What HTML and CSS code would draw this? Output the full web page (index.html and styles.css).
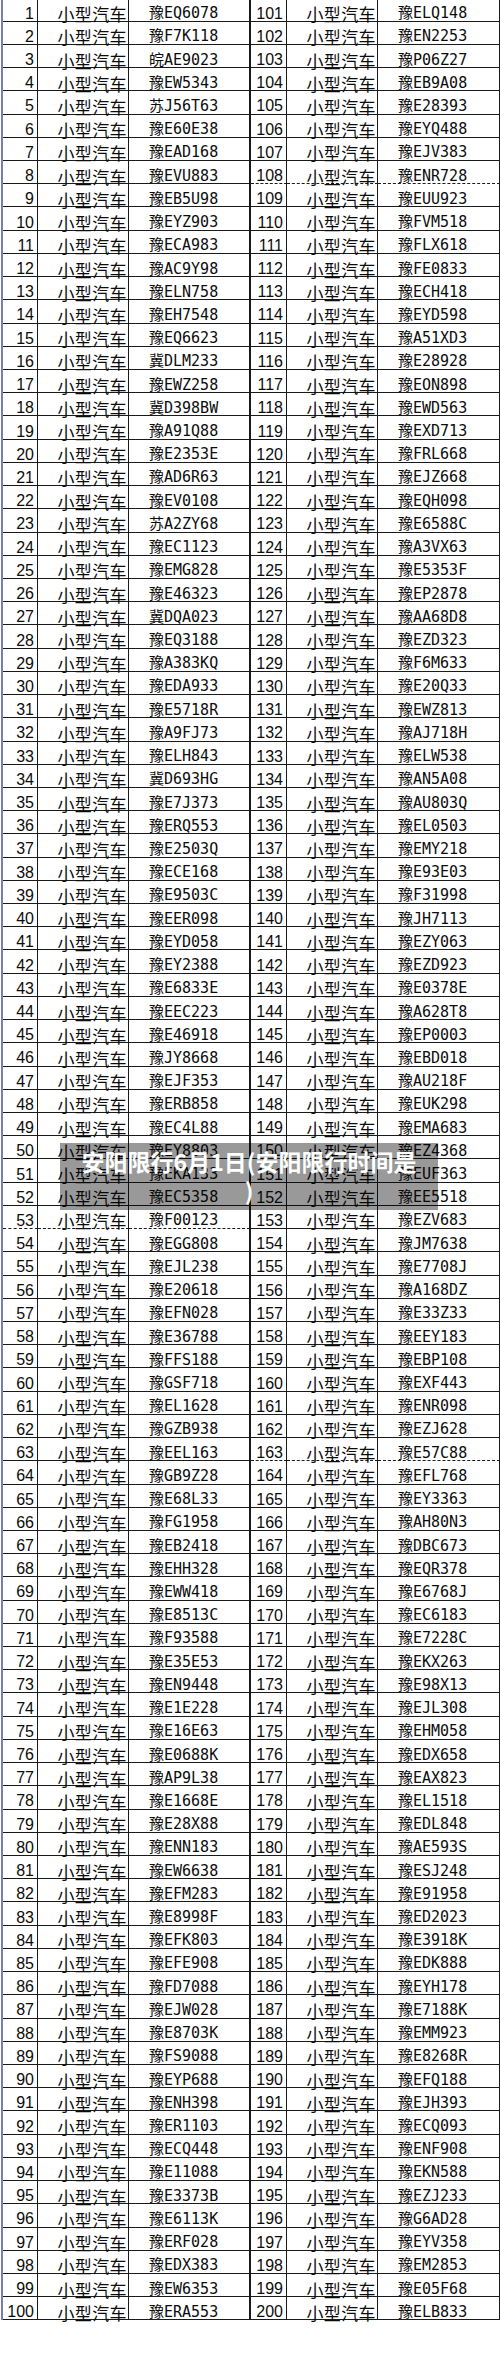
FILE: index.html
```html
<!DOCTYPE html>
<html lang="zh">
<head>
<meta charset="utf-8">
<title>安阳限行6月1日</title>
<link rel="stylesheet" href="styles.css">
</head>
<body>
<div class="page">
  <div class="sheet">
    <div class="tbl left">
      <div class="n">1</div><div class="t">小型汽车</div><div class="p">豫EQ6078</div>
      <div class="n">2</div><div class="t">小型汽车</div><div class="p">豫F7K118</div>
      <div class="n">3</div><div class="t">小型汽车</div><div class="p">皖AE9023</div>
      <div class="n">4</div><div class="t">小型汽车</div><div class="p">豫EW5343</div>
      <div class="n">5</div><div class="t">小型汽车</div><div class="p">苏J56T63</div>
      <div class="n">6</div><div class="t">小型汽车</div><div class="p">豫E60E38</div>
      <div class="n">7</div><div class="t">小型汽车</div><div class="p">豫EAD168</div>
      <div class="n">8</div><div class="t">小型汽车</div><div class="p">豫EVU883</div>
      <div class="n">9</div><div class="t">小型汽车</div><div class="p">豫EB5U98</div>
      <div class="n">10</div><div class="t">小型汽车</div><div class="p">豫EYZ903</div>
      <div class="n">11</div><div class="t">小型汽车</div><div class="p">豫ECA983</div>
      <div class="n">12</div><div class="t">小型汽车</div><div class="p">豫AC9Y98</div>
      <div class="n">13</div><div class="t">小型汽车</div><div class="p">豫ELN758</div>
      <div class="n">14</div><div class="t">小型汽车</div><div class="p">豫EH7548</div>
      <div class="n">15</div><div class="t">小型汽车</div><div class="p">豫EQ6623</div>
      <div class="n">16</div><div class="t">小型汽车</div><div class="p">冀DLM233</div>
      <div class="n">17</div><div class="t">小型汽车</div><div class="p">豫EWZ258</div>
      <div class="n">18</div><div class="t">小型汽车</div><div class="p">冀D398BW</div>
      <div class="n">19</div><div class="t">小型汽车</div><div class="p">豫A91Q88</div>
      <div class="n">20</div><div class="t">小型汽车</div><div class="p">豫E2353E</div>
      <div class="n">21</div><div class="t">小型汽车</div><div class="p">豫AD6R63</div>
      <div class="n">22</div><div class="t">小型汽车</div><div class="p">豫EV0108</div>
      <div class="n">23</div><div class="t">小型汽车</div><div class="p">苏A2ZY68</div>
      <div class="n">24</div><div class="t">小型汽车</div><div class="p">豫EC1123</div>
      <div class="n">25</div><div class="t">小型汽车</div><div class="p">豫EMG828</div>
      <div class="n">26</div><div class="t">小型汽车</div><div class="p">豫E46323</div>
      <div class="n">27</div><div class="t">小型汽车</div><div class="p">冀DQA023</div>
      <div class="n">28</div><div class="t">小型汽车</div><div class="p">豫EQ3188</div>
      <div class="n">29</div><div class="t">小型汽车</div><div class="p">豫A383KQ</div>
      <div class="n">30</div><div class="t">小型汽车</div><div class="p">豫EDA933</div>
      <div class="n">31</div><div class="t">小型汽车</div><div class="p">豫E5718R</div>
      <div class="n">32</div><div class="t">小型汽车</div><div class="p">豫A9FJ73</div>
      <div class="n">33</div><div class="t">小型汽车</div><div class="p">豫ELH843</div>
      <div class="n">34</div><div class="t">小型汽车</div><div class="p">冀D693HG</div>
      <div class="n">35</div><div class="t">小型汽车</div><div class="p">豫E7J373</div>
      <div class="n">36</div><div class="t">小型汽车</div><div class="p">豫ERQ553</div>
      <div class="n">37</div><div class="t">小型汽车</div><div class="p">豫E2503Q</div>
      <div class="n">38</div><div class="t">小型汽车</div><div class="p">豫ECE168</div>
      <div class="n">39</div><div class="t">小型汽车</div><div class="p">豫E9503C</div>
      <div class="n">40</div><div class="t">小型汽车</div><div class="p">豫EER098</div>
      <div class="n">41</div><div class="t">小型汽车</div><div class="p">豫EYD058</div>
      <div class="n">42</div><div class="t">小型汽车</div><div class="p">豫EY2388</div>
      <div class="n">43</div><div class="t">小型汽车</div><div class="p">豫E6833E</div>
      <div class="n">44</div><div class="t">小型汽车</div><div class="p">豫EEC223</div>
      <div class="n">45</div><div class="t">小型汽车</div><div class="p">豫E46918</div>
      <div class="n">46</div><div class="t">小型汽车</div><div class="p">豫JY8668</div>
      <div class="n">47</div><div class="t">小型汽车</div><div class="p">豫EJF353</div>
      <div class="n">48</div><div class="t">小型汽车</div><div class="p">豫ERB858</div>
      <div class="n">49</div><div class="t">小型汽车</div><div class="p">豫EC4L88</div>
      <div class="n">50</div><div class="t">小型汽车</div><div class="p">豫EY8803</div>
      <div class="n">51</div><div class="t">小型汽车</div><div class="p">豫EKA133</div>
      <div class="n">52</div><div class="t">小型汽车</div><div class="p">豫EC5358</div>
      <div class="n dash">53</div><div class="t dash">小型汽车</div><div class="p dash">豫F00123</div>
      <div class="n">54</div><div class="t">小型汽车</div><div class="p">豫EGG808</div>
      <div class="n">55</div><div class="t">小型汽车</div><div class="p">豫EJL238</div>
      <div class="n">56</div><div class="t">小型汽车</div><div class="p">豫E20618</div>
      <div class="n">57</div><div class="t">小型汽车</div><div class="p">豫EFN028</div>
      <div class="n">58</div><div class="t">小型汽车</div><div class="p">豫E36788</div>
      <div class="n">59</div><div class="t">小型汽车</div><div class="p">豫FFS188</div>
      <div class="n">60</div><div class="t">小型汽车</div><div class="p">豫GSF718</div>
      <div class="n">61</div><div class="t">小型汽车</div><div class="p">豫EL1628</div>
      <div class="n">62</div><div class="t">小型汽车</div><div class="p">豫GZB938</div>
      <div class="n">63</div><div class="t">小型汽车</div><div class="p">豫EEL163</div>
      <div class="n">64</div><div class="t">小型汽车</div><div class="p">豫GB9Z28</div>
      <div class="n">65</div><div class="t">小型汽车</div><div class="p">豫E68L33</div>
      <div class="n">66</div><div class="t">小型汽车</div><div class="p">豫FG1958</div>
      <div class="n">67</div><div class="t">小型汽车</div><div class="p">豫EB2418</div>
      <div class="n">68</div><div class="t">小型汽车</div><div class="p">豫EHH328</div>
      <div class="n">69</div><div class="t">小型汽车</div><div class="p">豫EWW418</div>
      <div class="n">70</div><div class="t">小型汽车</div><div class="p">豫E8513C</div>
      <div class="n">71</div><div class="t">小型汽车</div><div class="p">豫F93588</div>
      <div class="n">72</div><div class="t">小型汽车</div><div class="p">豫E35E53</div>
      <div class="n">73</div><div class="t">小型汽车</div><div class="p">豫EN9448</div>
      <div class="n">74</div><div class="t">小型汽车</div><div class="p">豫E1E228</div>
      <div class="n">75</div><div class="t">小型汽车</div><div class="p">豫E16E63</div>
      <div class="n">76</div><div class="t">小型汽车</div><div class="p">豫E0688K</div>
      <div class="n">77</div><div class="t">小型汽车</div><div class="p">豫AP9L38</div>
      <div class="n">78</div><div class="t">小型汽车</div><div class="p">豫E1668E</div>
      <div class="n">79</div><div class="t">小型汽车</div><div class="p">豫E28X88</div>
      <div class="n">80</div><div class="t">小型汽车</div><div class="p">豫ENN183</div>
      <div class="n">81</div><div class="t">小型汽车</div><div class="p">豫EW6638</div>
      <div class="n">82</div><div class="t">小型汽车</div><div class="p">豫EFM283</div>
      <div class="n">83</div><div class="t">小型汽车</div><div class="p">豫E8998F</div>
      <div class="n">84</div><div class="t">小型汽车</div><div class="p">豫EFK803</div>
      <div class="n">85</div><div class="t">小型汽车</div><div class="p">豫EFE908</div>
      <div class="n">86</div><div class="t">小型汽车</div><div class="p">豫FD7088</div>
      <div class="n">87</div><div class="t">小型汽车</div><div class="p">豫EJW028</div>
      <div class="n">88</div><div class="t">小型汽车</div><div class="p">豫E8703K</div>
      <div class="n">89</div><div class="t">小型汽车</div><div class="p">豫FS9088</div>
      <div class="n">90</div><div class="t">小型汽车</div><div class="p">豫EYP688</div>
      <div class="n">91</div><div class="t">小型汽车</div><div class="p">豫ENH398</div>
      <div class="n">92</div><div class="t">小型汽车</div><div class="p">豫ER1103</div>
      <div class="n">93</div><div class="t">小型汽车</div><div class="p">豫ECQ448</div>
      <div class="n">94</div><div class="t">小型汽车</div><div class="p">豫E11088</div>
      <div class="n">95</div><div class="t">小型汽车</div><div class="p">豫E3373B</div>
      <div class="n">96</div><div class="t">小型汽车</div><div class="p">豫E6113K</div>
      <div class="n">97</div><div class="t">小型汽车</div><div class="p">豫ERF028</div>
      <div class="n">98</div><div class="t">小型汽车</div><div class="p">豫EDX383</div>
      <div class="n">99</div><div class="t">小型汽车</div><div class="p">豫EW6353</div>
      <div class="n">100</div><div class="t">小型汽车</div><div class="p">豫ERA553</div>
    </div>
    <div class="tbl right">
      <div class="n">101</div><div class="t">小型汽车</div><div class="p">豫ELQ148</div>
      <div class="n">102</div><div class="t">小型汽车</div><div class="p">豫EN2253</div>
      <div class="n">103</div><div class="t">小型汽车</div><div class="p">豫P06Z27</div>
      <div class="n">104</div><div class="t">小型汽车</div><div class="p">豫EB9A08</div>
      <div class="n">105</div><div class="t">小型汽车</div><div class="p">豫E28393</div>
      <div class="n">106</div><div class="t">小型汽车</div><div class="p">豫EYQ488</div>
      <div class="n">107</div><div class="t">小型汽车</div><div class="p">豫EJV383</div>
      <div class="n dash">108</div><div class="t dash">小型汽车</div><div class="p dash">豫ENR728</div>
      <div class="n">109</div><div class="t">小型汽车</div><div class="p">豫EUU923</div>
      <div class="n">110</div><div class="t">小型汽车</div><div class="p">豫FVM518</div>
      <div class="n">111</div><div class="t">小型汽车</div><div class="p">豫FLX618</div>
      <div class="n">112</div><div class="t">小型汽车</div><div class="p">豫FE0833</div>
      <div class="n">113</div><div class="t">小型汽车</div><div class="p">豫ECH418</div>
      <div class="n">114</div><div class="t">小型汽车</div><div class="p">豫EYD598</div>
      <div class="n">115</div><div class="t">小型汽车</div><div class="p">豫A51XD3</div>
      <div class="n">116</div><div class="t">小型汽车</div><div class="p">豫E28928</div>
      <div class="n">117</div><div class="t">小型汽车</div><div class="p">豫EON898</div>
      <div class="n">118</div><div class="t">小型汽车</div><div class="p">豫EWD563</div>
      <div class="n">119</div><div class="t">小型汽车</div><div class="p">豫EXD713</div>
      <div class="n">120</div><div class="t">小型汽车</div><div class="p">豫FRL668</div>
      <div class="n">121</div><div class="t">小型汽车</div><div class="p">豫EJZ668</div>
      <div class="n">122</div><div class="t">小型汽车</div><div class="p">豫EQH098</div>
      <div class="n">123</div><div class="t">小型汽车</div><div class="p">豫E6588C</div>
      <div class="n">124</div><div class="t">小型汽车</div><div class="p">豫A3VX63</div>
      <div class="n">125</div><div class="t">小型汽车</div><div class="p">豫E5353F</div>
      <div class="n">126</div><div class="t">小型汽车</div><div class="p">豫EP2878</div>
      <div class="n">127</div><div class="t">小型汽车</div><div class="p">豫AA68D8</div>
      <div class="n">128</div><div class="t">小型汽车</div><div class="p">豫EZD323</div>
      <div class="n">129</div><div class="t">小型汽车</div><div class="p">豫F6M633</div>
      <div class="n">130</div><div class="t">小型汽车</div><div class="p">豫E20Q33</div>
      <div class="n">131</div><div class="t">小型汽车</div><div class="p">豫EWZ813</div>
      <div class="n">132</div><div class="t">小型汽车</div><div class="p">豫AJ718H</div>
      <div class="n">133</div><div class="t">小型汽车</div><div class="p">豫ELW538</div>
      <div class="n">134</div><div class="t">小型汽车</div><div class="p">豫AN5A08</div>
      <div class="n">135</div><div class="t">小型汽车</div><div class="p">豫AU803Q</div>
      <div class="n">136</div><div class="t">小型汽车</div><div class="p">豫EL0503</div>
      <div class="n">137</div><div class="t">小型汽车</div><div class="p">豫EMY218</div>
      <div class="n">138</div><div class="t">小型汽车</div><div class="p">豫E93E03</div>
      <div class="n">139</div><div class="t">小型汽车</div><div class="p">豫F31998</div>
      <div class="n">140</div><div class="t">小型汽车</div><div class="p">豫JH7113</div>
      <div class="n">141</div><div class="t">小型汽车</div><div class="p">豫EZY063</div>
      <div class="n">142</div><div class="t">小型汽车</div><div class="p">豫EZD923</div>
      <div class="n">143</div><div class="t">小型汽车</div><div class="p">豫E0378E</div>
      <div class="n">144</div><div class="t">小型汽车</div><div class="p">豫A628T8</div>
      <div class="n">145</div><div class="t">小型汽车</div><div class="p">豫EP0003</div>
      <div class="n">146</div><div class="t">小型汽车</div><div class="p">豫EBD018</div>
      <div class="n">147</div><div class="t">小型汽车</div><div class="p">豫AU218F</div>
      <div class="n">148</div><div class="t">小型汽车</div><div class="p">豫EUK298</div>
      <div class="n">149</div><div class="t">小型汽车</div><div class="p">豫EMA683</div>
      <div class="n">150</div><div class="t">小型汽车</div><div class="p">豫EZ4368</div>
      <div class="n">151</div><div class="t">小型汽车</div><div class="p">豫EUF363</div>
      <div class="n">152</div><div class="t">小型汽车</div><div class="p">豫EE5518</div>
      <div class="n">153</div><div class="t">小型汽车</div><div class="p">豫EZV683</div>
      <div class="n">154</div><div class="t">小型汽车</div><div class="p">豫JM7638</div>
      <div class="n">155</div><div class="t">小型汽车</div><div class="p">豫E7708J</div>
      <div class="n">156</div><div class="t">小型汽车</div><div class="p">豫A168DZ</div>
      <div class="n">157</div><div class="t">小型汽车</div><div class="p">豫E33Z33</div>
      <div class="n">158</div><div class="t">小型汽车</div><div class="p">豫EEY183</div>
      <div class="n">159</div><div class="t">小型汽车</div><div class="p">豫EBP108</div>
      <div class="n">160</div><div class="t">小型汽车</div><div class="p">豫EXF443</div>
      <div class="n">161</div><div class="t">小型汽车</div><div class="p">豫ENR098</div>
      <div class="n">162</div><div class="t">小型汽车</div><div class="p">豫EZJ628</div>
      <div class="n dash">163</div><div class="t dash">小型汽车</div><div class="p dash">豫E57C88</div>
      <div class="n">164</div><div class="t">小型汽车</div><div class="p">豫EFL768</div>
      <div class="n">165</div><div class="t">小型汽车</div><div class="p">豫EY3363</div>
      <div class="n">166</div><div class="t">小型汽车</div><div class="p">豫AH80N3</div>
      <div class="n">167</div><div class="t">小型汽车</div><div class="p">豫DBC673</div>
      <div class="n">168</div><div class="t">小型汽车</div><div class="p">豫EQR378</div>
      <div class="n">169</div><div class="t">小型汽车</div><div class="p">豫E6768J</div>
      <div class="n">170</div><div class="t">小型汽车</div><div class="p">豫EC6183</div>
      <div class="n">171</div><div class="t">小型汽车</div><div class="p">豫E7228C</div>
      <div class="n">172</div><div class="t">小型汽车</div><div class="p">豫EKX263</div>
      <div class="n">173</div><div class="t">小型汽车</div><div class="p">豫E98X13</div>
      <div class="n">174</div><div class="t">小型汽车</div><div class="p">豫EJL308</div>
      <div class="n">175</div><div class="t">小型汽车</div><div class="p">豫EHM058</div>
      <div class="n">176</div><div class="t">小型汽车</div><div class="p">豫EDX658</div>
      <div class="n">177</div><div class="t">小型汽车</div><div class="p">豫EAX823</div>
      <div class="n">178</div><div class="t">小型汽车</div><div class="p">豫EL1518</div>
      <div class="n">179</div><div class="t">小型汽车</div><div class="p">豫EDL848</div>
      <div class="n">180</div><div class="t">小型汽车</div><div class="p">豫AE593S</div>
      <div class="n">181</div><div class="t">小型汽车</div><div class="p">豫ESJ248</div>
      <div class="n">182</div><div class="t">小型汽车</div><div class="p">豫E91958</div>
      <div class="n">183</div><div class="t">小型汽车</div><div class="p">豫ED2023</div>
      <div class="n">184</div><div class="t">小型汽车</div><div class="p">豫E3918K</div>
      <div class="n">185</div><div class="t">小型汽车</div><div class="p">豫EDK888</div>
      <div class="n">186</div><div class="t">小型汽车</div><div class="p">豫EYH178</div>
      <div class="n">187</div><div class="t">小型汽车</div><div class="p">豫E7188K</div>
      <div class="n">188</div><div class="t">小型汽车</div><div class="p">豫EMM923</div>
      <div class="n">189</div><div class="t">小型汽车</div><div class="p">豫E8268R</div>
      <div class="n">190</div><div class="t">小型汽车</div><div class="p">豫EFQ188</div>
      <div class="n">191</div><div class="t">小型汽车</div><div class="p">豫EJH393</div>
      <div class="n">192</div><div class="t">小型汽车</div><div class="p">豫ECQ093</div>
      <div class="n">193</div><div class="t">小型汽车</div><div class="p">豫ENF908</div>
      <div class="n">194</div><div class="t">小型汽车</div><div class="p">豫EKN588</div>
      <div class="n">195</div><div class="t">小型汽车</div><div class="p">豫EZJ233</div>
      <div class="n">196</div><div class="t">小型汽车</div><div class="p">豫G6AD28</div>
      <div class="n">197</div><div class="t">小型汽车</div><div class="p">豫EYV358</div>
      <div class="n">198</div><div class="t">小型汽车</div><div class="p">豫EM2853</div>
      <div class="n">199</div><div class="t">小型汽车</div><div class="p">豫E05F68</div>
      <div class="n">200</div><div class="t">小型汽车</div><div class="p">豫ELB833</div>
    </div>
  </div>
  <div class="caption">安阳限行6月1日(安阳限行时间是<br>)</div>
</div>
</body>
</html>
```

FILE: styles.css
```css
html, body {
  margin: 0;
  padding: 0;
  background: #ffffff;
}

.page {
  position: relative;
  width: 500px;
  height: 2354px;
  overflow: hidden;
}

.sheet {
  display: flex;
  margin-top: -1.5px;
  padding-left: 1px;
  color: #0c0c0c;
}

.tbl {
  display: grid;
  grid-auto-rows: 23.23px;
}

.tbl.left {
  grid-template-columns: 35px 91px 121px;
  border-left: 2px solid #7c7cb4;
}

.tbl.right {
  grid-template-columns: 36px 91px 122px;
  border-left: 1px solid #1a1a1a;
}

.n, .t, .p {
  box-sizing: border-box;
  display: flex;
  align-items: center;
  border-right: 1px solid #1a1a1a;
  border-bottom: 1px solid #1a1a1a;
  padding-top: 8px;
  line-height: 1;
  white-space: nowrap;
}

.n {
  justify-content: flex-end;
  padding-right: 3px;
  font-family: "Liberation Sans", Arial, sans-serif;
  font-size: 16px;
}

.t {
  justify-content: flex-end;
  padding-right: 1px;
  font-family: "Noto Sans CJK SC", sans-serif;
  font-size: 17px;
  letter-spacing: 0.4px;
}

.p {
  padding-left: 20px;
  font-family: "DejaVu Sans Mono", "Noto Sans CJK SC", monospace;
  font-size: 15px;
}

.dash {
  border-bottom-style: dashed;
}

.caption {
  position: absolute;
  left: 60px;
  top: 1143px;
  width: 378px;
  box-sizing: border-box;
  padding: 4px 10px 5px;
  background: rgba(0, 0, 0, 0.4);
  color: #ffffff;
  font-family: "Noto Sans CJK SC", sans-serif;
  font-weight: 700;
  font-size: 23px;
  line-height: 29px;
  text-align: center;
}
```
